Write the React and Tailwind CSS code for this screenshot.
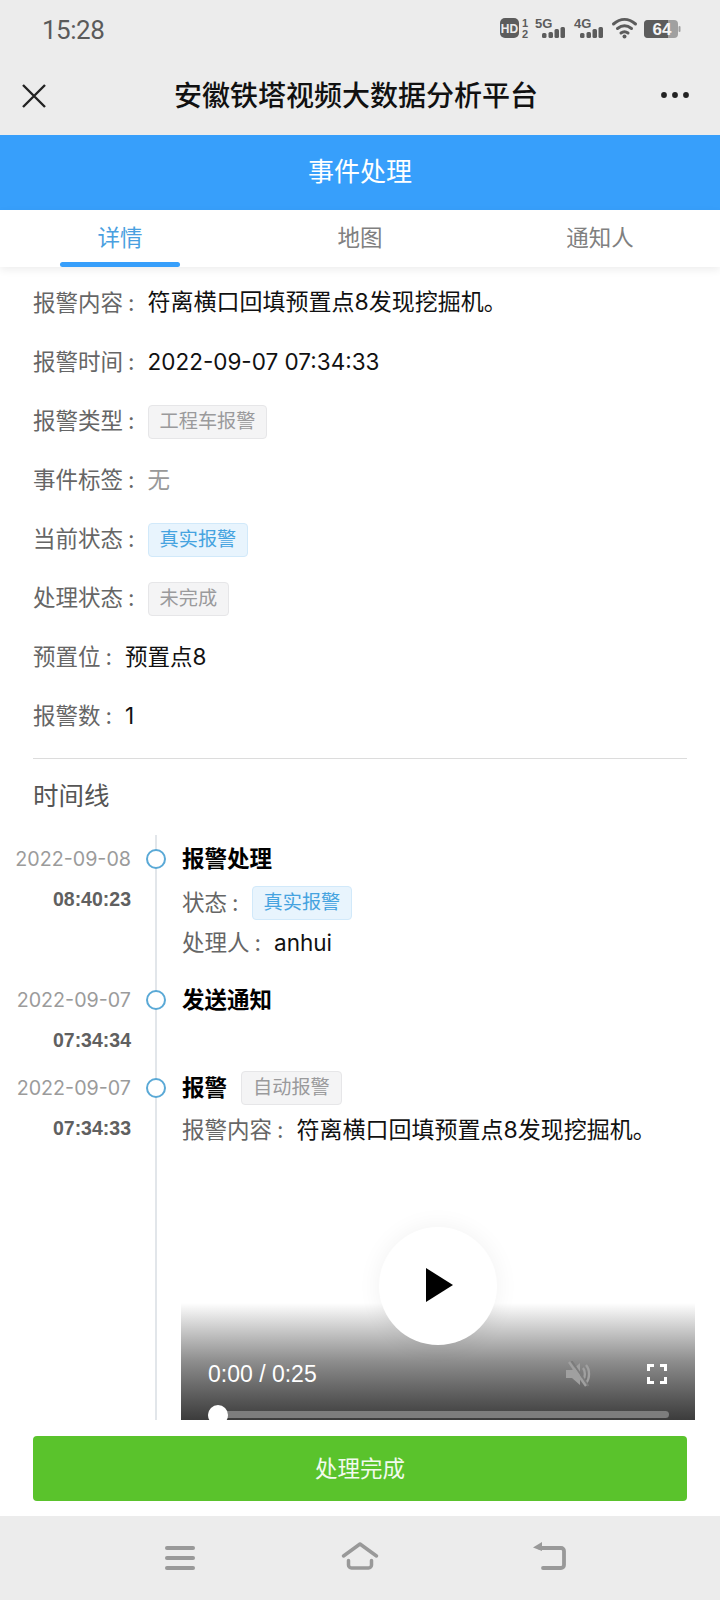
import React from "react";

const Tag = ({ blue, children, className = "" }) => (
  <span
    className={`inline-flex items-center h-[34px] px-[11px] rounded-[4px] border text-[19.2px] leading-none ${
      blue
        ? "bg-[#e8f4fd] border-[#d1e9fa] text-[#45a3e0]"
        : "bg-[#f4f4f5] border-[#e6e6e8] text-[#9a9a9c]"
    } ${className}`}
  >
    {children}
  </span>
);

const Colon = () => <span className="inline-block w-[24.5px] pl-[5px]">:</span>;

const Row = ({ label, children }) => (
  <div className="flex items-center h-[59px]">
    <span className="text-[#666666]">
      {label}
      <Colon />
    </span>
    {children}
  </div>
);

const TimeCell = ({ date, time }) => (
  <div className="w-[132px] shrink-0 text-right pr-[1px]">
    <div className="h-[48px] pt-[2px] flex items-center justify-end text-[19.7px] text-[#9b9b9b]">{date}</div>
    <div className="text-[19.5px] leading-[34px] -mt-[1px] font-bold text-[#606060] font-['Liberation_Sans',sans-serif]">{time}</div>
  </div>
);

const Dot = () => (
  <span className="absolute left-[-11px] top-[14px] w-[20px] h-[20px] rounded-full bg-white border-2 border-[#5aa9d6]" />
);

const StatusIcons = () => (
  <svg width="184" height="28" viewBox="0 -4 184 28" className="text-[#5c5c5c] -mt-[4px]">
    <rect x="0" y="0" width="19" height="20" rx="5" fill="currentColor" />
    <text x="9.500" y="15" textAnchor="middle" fontSize="12" fontWeight="700" fill="#ececec" fontFamily="Liberation Sans">HD</text>
    <text x="25" y="9" textAnchor="middle" fontSize="11" fontWeight="700" fill="currentColor" fontFamily="Liberation Sans">1</text>
    <text x="25" y="20" textAnchor="middle" fontSize="11" fontWeight="700" fill="currentColor" fontFamily="Liberation Sans">2</text>
    <text x="35" y="10" fontSize="13" fontWeight="700" fill="currentColor" fontFamily="Liberation Sans">5G</text>
    <rect x="42" y="15" width="4.500" height="5" rx="1.500" fill="currentColor" />
    <rect x="48.500" y="14" width="4.500" height="6" rx="1.500" fill="currentColor" />
    <rect x="54.500" y="11" width="4.500" height="9" rx="1.500" fill="currentColor" />
    <rect x="60.500" y="9" width="4.500" height="11" rx="1.500" fill="currentColor" />
    <text x="74" y="10" fontSize="13" fontWeight="700" fill="currentColor" fontFamily="Liberation Sans">4G</text>
    <rect x="80" y="15" width="4.500" height="5" rx="1.500" fill="currentColor" />
    <rect x="86.500" y="14" width="4.500" height="6" rx="1.500" fill="currentColor" />
    <rect x="92.500" y="11" width="4.500" height="9" rx="1.500" fill="currentColor" />
    <rect x="98.500" y="9" width="4.500" height="11" rx="1.500" fill="currentColor" />
    <g fill="none" stroke="currentColor" strokeWidth="3" strokeLinecap="round">
      <path d="M113.500 6c7-6 15-6 22 0" />
      <path d="M117.500 10.500c4.500-3.500 9.500-3.500 14 0" />
      <path d="M121 15c2.500-1.800 4.500-1.800 7 0" />
    </g>
    <circle cx="124.500" cy="18.500" r="2" fill="currentColor" />
    <rect x="144" y="2" width="34" height="18" rx="4" fill="#a0a0a0" />
    <path d="M148 2h20v18h-20a4 4 0 0 1-4-4V6a4 4 0 0 1 4-4z" fill="currentColor" />
    <rect x="178.500" y="8" width="2" height="6" rx="1" fill="#a0a0a0" />
    <text x="162" y="17" textAnchor="middle" fontSize="17" fontWeight="700" fill="#f5f5f5" fontFamily="Liberation Sans">64</text>
  </svg>
);

const MuteIcon = () => (
  <svg width="28" height="26" viewBox="0 0 28 26" className="text-[#a0a0a0]">
    <path d="M2 9h6l8-7v22l-8-7H2z" fill="currentColor" />
    <path d="M19 7c2.500 3 2.500 9 0 12M22 4c4 4.500 4 13.500 0 18" fill="none" stroke="currentColor" strokeWidth="2.400" />
    <path d="M7.500 0l17 25" stroke="#7c7c7c" strokeWidth="2" />
    <path d="M5 1l17 24" stroke="#a0a0a0" strokeWidth="2.400" />
  </svg>
);

const FullscreenIcon = () => (
  <svg width="20" height="20" viewBox="0 0 20 20" fill="none" stroke="white" strokeWidth="3">
    <path d="M1.500 7V1.500H7M13 1.500h5.500V7M1.500 13v5.500H7M13 18.500h5.500V13" />
  </svg>
);

const VideoBox = () => (
  <div className="relative w-[514px] -ml-[1px] mt-[79px] pt-[76px]">
    <div className="h-[117px] bg-gradient-to-b from-white via-[#8d8d8d] to-[#3c3c3c] relative overflow-hidden">
      <div className="flex items-center h-[46px] mt-[48px] pl-[27px] pr-[28px]">
        <span className="text-[23px] text-white flex-1 font-['Liberation_Sans',sans-serif]">
          0:00 / 0:25
        </span>
        <MuteIcon />
        <span className="w-[55px]" />
        <FullscreenIcon />
      </div>
      <div className="absolute left-[27px] right-[26px] top-[108px] h-[7px] rounded-full bg-[#7d7d7d]" />
      <div className="absolute left-[27px] top-[102px] w-[20px] h-[20px] rounded-full bg-white" />
    </div>
    <div className="absolute left-[198px] top-0 w-[118px] h-[118px] rounded-full bg-white shadow-[0_0_24px_rgba(0,0,0,0.06)] flex items-center justify-center">
      <svg width="27" height="34" viewBox="0 0 27 34" className="ml-[3px] -mt-[3px]">
        <path d="M0 0l27 17L0 34z" fill="#000" />
      </svg>
    </div>
  </div>
);

export default function App() {
  return (
    <div className="w-[720px] h-[1600px] flex flex-col bg-white overflow-hidden text-[22.5px] text-[#111] font-['Inter','Noto_Sans_CJK_SC',sans-serif]">
      <div className="bg-[#ececec] h-[135px] shrink-0 flex flex-col">
        <div className="h-[60px] flex items-center justify-between pl-[42px] pr-[36px]">
          <span className="text-[26px] text-[#5a5a5a] tracking-[-0.5px] font-['Roboto',sans-serif]">15:28</span>
          <StatusIcons />
        </div>
        <div className="flex-1 flex items-center justify-between pl-[22px] pr-[30px] -mt-[3px]">
          <svg width="24" height="24" viewBox="0 0 24 24" fill="none" stroke="#222" strokeWidth="2.400">
            <path d="M1 1l22 22M23 1L1 23" />
          </svg>
          <span className="text-[28px] font-medium text-[#111] ml-[6px]">安徽铁塔视频大数据分析平台</span>
          <svg width="30" height="8" viewBox="0 0 30 8" fill="#222" className="-mt-[2px]">
            <circle cx="4" cy="4" r="2.900" />
            <circle cx="15" cy="4" r="2.900" />
            <circle cx="26" cy="4" r="2.900" />
          </svg>
        </div>
      </div>

      <div className="h-[75px] shrink-0 bg-[#379ffb] flex items-center justify-center text-white text-[26px] pb-[2px]">
        事件处理
      </div>

      <div className="h-[57px] shrink-0 flex bg-white shadow-[0_3px_8px_rgba(0,0,0,0.07)] relative z-10">
        <div className="w-[240px] flex justify-center relative pt-[11px] text-[#4a9fe0]">
          详情
          <span className="absolute left-[60px] right-[60px] bottom-0 h-[5px] rounded-full bg-[#379ffb]" />
        </div>
        <div className="w-[240px] flex justify-center pt-[11px] text-[#808080]">地图</div>
        <div className="w-[240px] flex justify-center pt-[11px] text-[#808080]">通知人</div>
      </div>

      <div className="flex-1 min-h-0 overflow-hidden">
        <div className="px-[33px] pt-[6px]">
          <Row label="报警内容">
            <span className="text-[23px]">符离横口回填预置点8发现挖掘机。</span>
          </Row>
          <Row label="报警时间">
            <span>2022-09-07 07:34:33</span>
          </Row>
          <Row label="报警类型">
            <Tag className="mt-[2px]">工程车报警</Tag>
          </Row>
          <Row label="事件标签">
            <span className="text-[#999]">无</span>
          </Row>
          <Row label="当前状态">
            <Tag blue className="mt-[2px]">真实报警</Tag>
          </Row>
          <Row label="处理状态">
            <Tag className="mt-[2px]">未完成</Tag>
          </Row>
          <Row label="预置位">
            <span>预置点8</span>
          </Row>
          <Row label="报警数">
            <span>1</span>
          </Row>
          <div className="border-t border-[#dcdcdc] mt-[13px] pt-[19px] text-[25.5px] leading-[36px] text-[#555]">时间线</div>
        </div>

        <div className="mt-[21px]">
          <div className="flex h-[141px]">
            <TimeCell date="2022-09-08" time="08:40:23" />
            <div className="relative ml-[23px] flex-1 border-l-2 border-[#e2e6ea] pl-[25px]">
              <Dot />
              <div className="h-[48px] flex items-center font-bold text-black">报警处理</div>
              <div className="flex items-center h-[40px] text-[#666]">
                状态<Colon /><Tag blue>真实报警</Tag>
              </div>
              <div className="flex items-center h-[40px] text-[#666]">
                处理人<Colon /><span className="text-[#111]">anhui</span>
              </div>
            </div>
          </div>
          <div className="flex h-[88px]">
            <TimeCell date="2022-09-07" time="07:34:34" />
            <div className="relative ml-[23px] flex-1 border-l-2 border-[#e2e6ea] pl-[25px]">
              <Dot />
              <div className="h-[48px] flex items-center font-bold text-black">发送通知</div>
            </div>
          </div>
          <div className="flex h-[400px]">
            <TimeCell date="2022-09-07" time="07:34:33" />
            <div className="relative ml-[23px] flex-1 border-l-2 border-[#e2e6ea] pl-[25px]">
              <Dot />
              <div className="h-[48px] flex items-center font-bold text-black">
                报警<Tag className="ml-[14px] font-normal">自动报警</Tag>
              </div>
              <div className="flex items-center h-[36px] text-[#666]">
                报警内容<Colon /><span className="text-[#111] text-[23px]">符离横口回填预置点8发现挖掘机。</span>
              </div>
              <VideoBox />
            </div>
          </div>
        </div>
      </div>

      <div className="h-[96px] shrink-0 bg-white px-[33px] pt-[16px]">
        <div className="h-[65px] rounded-[4px] bg-[#5ac32c] flex items-center justify-center text-[#f2faee]">处理完成</div>
      </div>

      <div className="h-[84px] shrink-0 bg-[#ececec] flex items-start pt-[25px]">
        <div className="w-[720px] flex items-start pl-[165px]">
          <svg width="30" height="30" viewBox="0 0 30 30" fill="#999">
            <rect x="0" y="5" width="30" height="4" rx="2" />
            <rect x="0" y="15" width="30" height="4" rx="2" />
            <rect x="0" y="25" width="30" height="4" rx="2" />
          </svg>
          <svg width="38" height="30" viewBox="0 0 38 30" fill="none" stroke="#999" strokeWidth="3.500" strokeLinejoin="round" strokeLinecap="round" className="ml-[146px]">
            <path d="M2.500 15L19 3l16.500 12" />
            <path d="M7.500 19.500v4.500a3 3 0 0 0 3 3h17a3 3 0 0 0 3-3v-4.500" />
          </svg>
          <svg width="35" height="30" viewBox="0 0 35 30" fill="none" className="ml-[153px]">
            <path d="M8 7h21a3 3 0 0 1 3 3v14a3 3 0 0 1-3 3H11" stroke="#999" strokeWidth="3.800" strokeLinecap="round" />
            <path d="M1 6.500L10 1v9z" fill="#999" />
          </svg>
        </div>
      </div>
    </div>
  );
}
